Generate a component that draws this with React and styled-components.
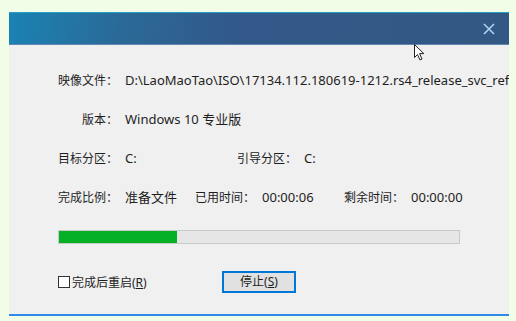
import styled, { createGlobalStyle } from "styled-components"

const Global = createGlobalStyle`
    html, body {
        margin: 0;
        padding: 0;
        background: #f1fde7;
    }
    body {
        font-family: "Noto Sans", "Noto Sans CJK SC", sans-serif;
        font-size: 12px;
        color: #1e1e1e;
    }
`;

const Page = styled.div`
    width: 516px;
    height: 321px;
    padding: 12px 7px 0 9px;
    box-sizing: border-box;
`;

const Dialog = styled.div`
    position: relative;
    width: 500px;
    height: 302px;
    background: #f0f0f0;
    border-bottom: 2px solid #2d8be6;
    display: flex;
    flex-direction: column;
    overflow: hidden;
`;

const TitleBar = styled.div`
    height: 31px;
    flex-shrink: 0;
    border-top: 1px solid #23a0c4;
    border-bottom: 1px solid #6288b2;
    background: linear-gradient(100deg, #1a83b4 0%, #2a6a98 22%, #32598a 45%, #335883 100%);
    display: flex;
    align-items: center;
    justify-content: flex-end;
    padding-right: 14px;
`;

const Close = styled.svg`
    width: 12px;
    height: 12px;
`;

const Body = styled.div`
    flex: 1;
    padding: 26px 0 0 49px;
    display: flex;
    flex-direction: column;
`;

const Row = styled.div`
    height: 39px;
    display: flex;
    align-items: baseline;
    white-space: nowrap;
    line-height: 18px;
`;

const Field = styled.div`
    display: flex;
    align-items: baseline;
    width: ${p => (p.$w ? `${p.$w}px` : "auto")};
    flex-shrink: 0;
`;

const Label = styled.span`
    width: ${p => (p.$fixed ? "60px" : "auto")};
    text-align: right;
    flex-shrink: 0;
`;

const Value = styled.span`
    margin-left: 7px;
    font-size: 13px;
`;

const Track = styled.div`
    margin-top: 3px;
    width: 400px;
    height: 12px;
    border: 1px solid #c9c9c9;
    background: #e6e6e6;
`;

const Fill = styled.div`
    height: 100%;
    background: #06b025;
`;

const Footer = styled.div`
    margin-top: 27px;
    display: flex;
    align-items: center;
`;

const Check = styled.label`
    display: flex;
    align-items: center;
    width: 164px;
`;

const Box = styled.span`
    width: 10px;
    height: 10px;
    border: 1px solid #333;
    background: #fff;
    margin-right: 2px;
`;

const Button = styled.button`
    width: 74px;
    height: 22px;
    background: #e1e1e1;
    border: 2px solid #0078d7;
    font-family: inherit;
    font-size: 12px;
    color: #1e1e1e;
    padding: 0;
    line-height: 16px;
`;

const Cursor = styled.svg`
    position: absolute;
    left: 405px;
    top: 32px;
    width: 12px;
    height: 17px;
`;

const progress = 0.295;

export default function App() {
    return (
        <Page>
            <Global />
            <Dialog>
                <TitleBar>
                    <Close viewBox="0 0 12 12">
                        <path d="M1 1 L11 11 M11 1 L1 11" stroke="#a9d3f2" strokeWidth="1.6" />
                    </Close>
                </TitleBar>
                <Body>
                    <Row>
                        <Label $fixed>映像文件：</Label>
                        <Value>D:\LaoMaoTao\ISO\17134.112.180619-1212.rs4_release_svc_refresh_CLIENT</Value>
                    </Row>
                    <Row>
                        <Label $fixed>版本：</Label>
                        <Value>Windows 10 专业版</Value>
                    </Row>
                    <Row>
                        <Field $w={179}>
                            <Label $fixed>目标分区：</Label>
                            <Value>C:</Value>
                        </Field>
                        <Field>
                            <Label>引导分区：</Label>
                            <Value>C:</Value>
                        </Field>
                    </Row>
                    <Row>
                        <Field $w={137}>
                            <Label $fixed>完成比例：</Label>
                            <Value>准备文件</Value>
                        </Field>
                        <Field $w={149}>
                            <Label>已用时间：</Label>
                            <Value>00:00:06</Value>
                        </Field>
                        <Field>
                            <Label>剩余时间：</Label>
                            <Value>00:00:00</Value>
                        </Field>
                    </Row>
                    <Track>
                        <Fill style={{ width: `${progress * 100}%` }} />
                    </Track>
                    <Footer>
                        <Check>
                            <Box />
                            完成后重启(<u>R</u>)
                        </Check>
                        <Button>停止(<u>S</u>)</Button>
                    </Footer>
                </Body>
                <Cursor viewBox="0 0 12 17">
                    <path d="M0.5 0.5 L0.5 13.5 L3.5 10.5 L6 16 L8 15 L5.6 9.6 L9.8 9.6 Z" fill="#fff" stroke="#222" strokeWidth="1" />
                </Cursor>
            </Dialog>
        </Page>
    )
}
